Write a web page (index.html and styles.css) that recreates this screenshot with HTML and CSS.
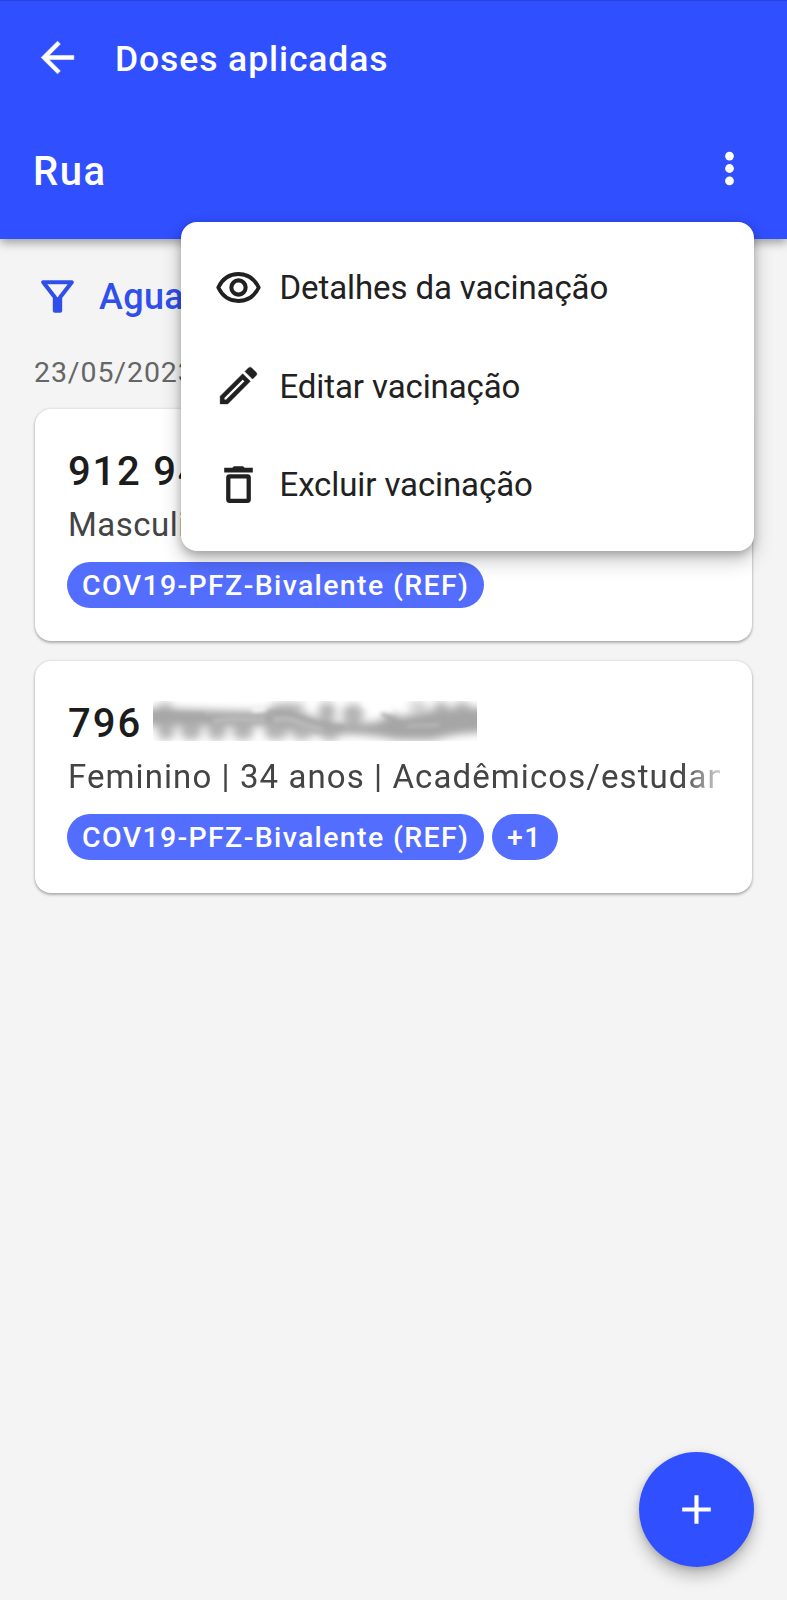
FILE: index.html
```html
<!DOCTYPE html>
<html lang="pt-BR">
<head>
<meta charset="utf-8">
<title>Doses aplicadas</title>
<link rel="stylesheet" href="styles.css">
</head>
<body>
<div class="screen">
  <header class="header">
    <div class="bar">
      <svg class="icon" viewBox="0 0 24 24"><path fill="currentColor" stroke="currentColor" stroke-width=".25" d="M20 11H7.830l5.590-5.590L12 4l-8 8 8 8 1.410-1.410L7.830 13H20z"/></svg>
      <h1 class="title">Doses aplicadas</h1>
    </div>
    <div class="subbar">
      <h2 class="place">Rua</h2>
      <svg class="icon" viewBox="0 0 24 24"><g fill="currentColor"><circle cx="12" cy="5.900" r="2.150"/><circle cx="12" cy="12" r="2.150"/><circle cx="12" cy="18.100" r="2.150"/></g></svg>
    </div>
  </header>

  <main class="content">
    <div class="filter">
      <svg class="icon" viewBox="0 0 24 24"><path fill="none" stroke="currentColor" stroke-width="2" stroke-linejoin="round" d="M5 5h14l-5.700 7.400V19h-2.600v-6.600z"/><path fill="currentColor" d="M10.500 12.300h3V19h-3z"/></svg>
      <span class="filter-label">Agua</span>
    </div>
    <div class="date">23/05/2023</div>

    <article class="card">
      <div class="number number-first">912 94</div>
      <div class="person person-short">Masculino</div>
      <div class="chips"><span class="chip">COV19-PFZ-Bivalente (REF)</span></div>
    </article>

    <article class="card">
      <div class="number"><span>796</span>
        <svg class="smudge" viewBox="0 0 324 40">
          <defs>
            <filter id="soft" x="-10%" y="-50%" width="120%" height="200%"><feGaussianBlur stdDeviation="4.200"/></filter>
            <filter id="fine" x="-10%" y="-50%" width="120%" height="200%"><feGaussianBlur stdDeviation="2"/></filter>
          </defs>
          <g filter="url(#soft)">
            <path fill="#a6a6a6" d="M-10 8C30 7 60 10 98 10c30-3 50-2 66 8 30 7 48 5 66 1 2-8 10-9 18-3 20-6 50-10 86-9v24c-30 2-40 4-54 8h-36c-20-4-40-7-62-5-30 1-50-9-74-9H-10z"/>
            <g fill="#b4b4b4">
              <ellipse cx="12" cy="5" rx="8" ry="3"/><ellipse cx="135" cy="6" rx="18" ry="4"/>
              <ellipse cx="174" cy="11" rx="9" ry="10"/><ellipse cx="200" cy="13" rx="11" ry="10"/>
              <ellipse cx="265" cy="5" rx="10" ry="3"/><ellipse cx="288" cy="5" rx="8" ry="4"/><ellipse cx="309" cy="5" rx="8" ry="4"/>
              <ellipse cx="13" cy="31" rx="9" ry="8"/><ellipse cx="38" cy="31" rx="11" ry="8"/><ellipse cx="64" cy="31" rx="10" ry="8"/><ellipse cx="90" cy="31" rx="11" ry="8"/>
              <ellipse cx="123" cy="31" rx="12" ry="8"/><ellipse cx="149" cy="31" rx="11" ry="8"/><ellipse cx="177" cy="35" rx="9" ry="5"/>
            </g>
          </g>
          <g filter="url(#fine)" fill="none">
            <path stroke="#bababa" stroke-width="6" d="M60 21C80 15 92 20 112 18M120 19c22-4 32 6 50 10"/>
            <path stroke="#a6a6a6" stroke-width="3" d="M0 14h52M112 12c34-2 42 14 80 14M228 13c10 1 12 12 26 11s40-2 60-8"/>
            <path stroke="#c2c2c2" stroke-width="2" d="M254 25l32-1"/>
            <path stroke="#fff" stroke-width="4" d="M99 9l14-1M210 3l30 6"/>
          </g>
        </svg>
      </div>
      <div class="person person-long">Feminino | 34 anos | Acadêmicos/estudan</div>
      <div class="chips">
        <span class="chip">COV19-PFZ-Bivalente (REF)</span>
        <span class="chip chip-more">+1</span>
      </div>
    </article>
  </main>

  <nav class="menu">
    <div class="menu-item">
      <svg class="icon" viewBox="0 0 24 24"><g fill="none" stroke="currentColor"><path stroke-width="1.900" stroke-linejoin="round" d="M2.100 12C4.100 7.800 7.700 5.400 12 5.400S19.900 7.800 21.900 12c-2 4.200-5.600 6.600-9.900 6.600S4.100 16.200 2.100 12z"/><circle cx="12" cy="12" r="3.500" stroke-width="2"/></g></svg>
      <span>Detalhes da vacinação</span>
    </div>
    <div class="menu-item">
      <svg class="icon" viewBox="0 0 24 24"><path fill="currentColor" stroke="currentColor" stroke-width=".2" d="M14.060 9.020l.92.92L5.920 19H5v-.92l9.060-9.060M17.660 3c-.25 0-.51.1-.7.29l-1.830 1.830 3.750 3.750 1.830-1.830c.39-.39.39-1.020 0-1.410l-2.340-2.340c-.2-.2-.45-.29-.71-.29zm-3.600 3.190L3 17.250V21h3.750L17.810 9.940l-3.750-3.750z"/></svg>
      <span>Editar vacinação</span>
    </div>
    <div class="menu-item">
      <svg class="icon" viewBox="0 0 24 24"><path fill="currentColor" d="M5 3.800h4l.6-.6q.2-.2.600-.2h3.600q.4 0 .6.200l.6.600h4v2.300H5z"/><rect x="7" y="8" width="10" height="12" rx=".6" fill="none" stroke="currentColor" stroke-width="2.100"/></svg>
      <span>Excluir vacinação</span>
    </div>
  </nav>

  <button class="fab" aria-label="Adicionar"><svg class="icon" viewBox="0 0 24 24"><path fill="currentColor" d="M19 13h-6v6h-2v-6H5v-2h6V5h2v6h6z"/></svg></button>
</div>
</body>
</html>
```
FILE: styles.css
```css
* { box-sizing: border-box; }
body { margin: 0; font-family: Roboto, "Liberation Sans", sans-serif; }
.screen {
  position: relative;
  width: 787px;
  height: 1600px;
  overflow: hidden;
  background: #f4f4f4;
}
.icon { display: block; width: 49px; height: 49px; flex: none; }
.header {
  height: 239px;
  padding: 0 33px;
  border-top: 1px solid #2942d8;
  background: #304ffe;
  color: #fff;
  box-shadow: 0 4px 9px rgba(0, 0, 0, .34);
}
.bar { display: flex; align-items: center; gap: 33px; height: 113px; }
.title, .place { margin: 0; font-weight: 500; white-space: nowrap; }
.title { font-size: 35.500px; line-height: 50px; padding-top: 2px; letter-spacing: .9px; }
.subbar { display: flex; align-items: center; justify-content: space-between; height: 109px; }
.place { font-size: 40px; line-height: 50px; padding-top: 7px; letter-spacing: 1.600px; }
.content { padding: 33px 35px 0 35px; }
.filter {
  display: flex;
  align-items: center;
  gap: 17px;
  height: 49px;
  margin-left: -2px;
  color: #304fea;
  font-size: 36px;
  font-weight: 500;
  letter-spacing: .3px;
}
.date {
  height: 66px;
  margin: 22px 0 0 -1px;
  font-size: 28.500px;
  line-height: 59px;
  letter-spacing: .9px;
  color: #666;
}
.card {
  height: 232px;
  margin-bottom: 20px;
  padding: 32px 32px 0;
  border-radius: 16px;
  background: #fff;
  box-shadow: 0 2px 3px rgba(0, 0, 0, .26), 0 0 3px rgba(0, 0, 0, .16);
}
.number {
  display: flex;
  align-items: center;
  gap: 11px;
  height: 60px;
  padding-left: 1px;
  font-size: 40px;
  font-weight: 500;
  letter-spacing: 2px;
  color: #1c1c1c;
}
.number-first { letter-spacing: 1.750px; }
.smudge { width: 324px; height: 40px; margin-top: -4px; overflow: hidden; }
.person {
  height: 48px;
  padding-left: 1px;
  font-size: 33px;
  line-height: 48px;
  letter-spacing: 1.080px;
  color: #444;
  white-space: nowrap;
  overflow: hidden;
}
.person-short { letter-spacing: .5px; }
.person-long { -webkit-mask-image: linear-gradient(90deg, #000 94%, transparent 102%); mask-image: linear-gradient(90deg, #000 94%, transparent 102%); }
.chips { display: flex; gap: 8px; margin-top: 13px; }
.chip {
  width: 417px;
  height: 46px;
  padding-left: 15px;
  border-radius: 23px;
  background: #536dfe;
  color: #fff;
  font-size: 28.500px;
  font-weight: 500;
  line-height: 47px;
  letter-spacing: 1.350px;
  white-space: nowrap;
}
.chip-more { width: 66px; }
.menu {
  position: absolute;
  left: 180.500px;
  top: 222px;
  width: 573.500px;
  height: 328.500px;
  padding: 16px 33px;
  border-radius: 16px;
  background: #fff;
  color: #212121;
  box-shadow: 0 9px 20px rgba(0, 0, 0, .24), 0 3px 8px rgba(0, 0, 0, .22);
}
.menu-item {
  display: flex;
  align-items: center;
  gap: 17px;
  height: 98.500px;
  font-size: 33px;
  letter-spacing: -.1px;
  white-space: nowrap;
}
.menu-item span { padding-top: 1px; }
.fab {
  position: absolute;
  left: 639px;
  top: 1452px;
  display: flex;
  align-items: center;
  justify-content: center;
  width: 115px;
  height: 115px;
  padding: 0;
  border: 0;
  border-radius: 50%;
  background: #304ffe;
  color: #fff;
  box-shadow: 0 9px 16px rgba(0, 0, 0, .24), 0 2px 6px rgba(0, 0, 0, .14);
}
```
